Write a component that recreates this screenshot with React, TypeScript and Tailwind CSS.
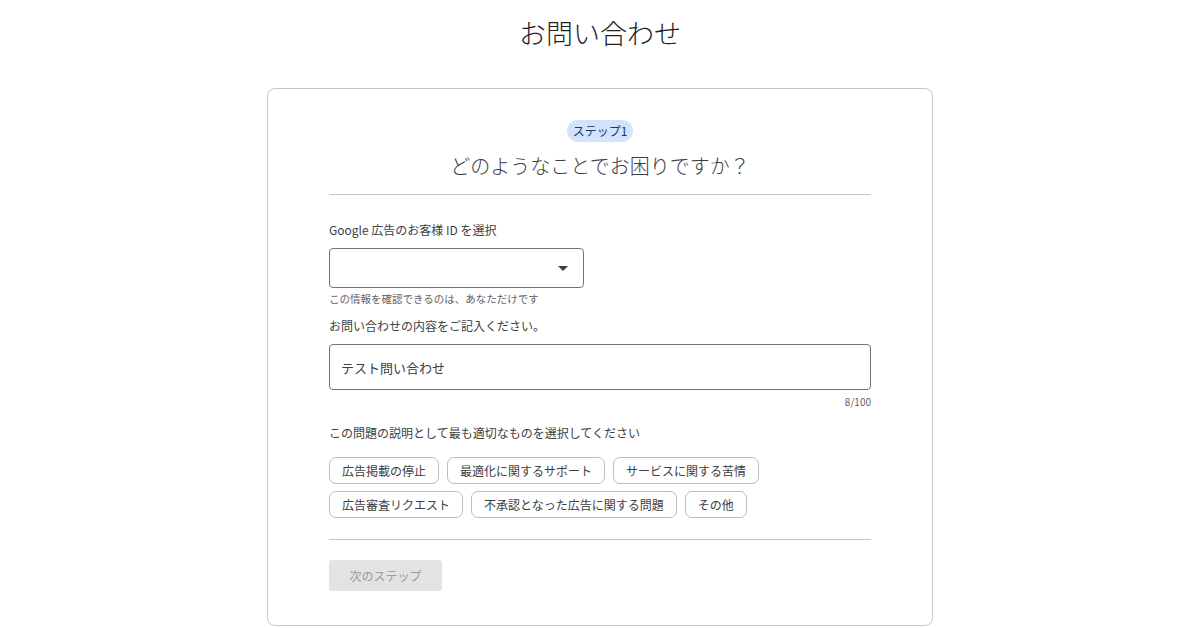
import { useState } from 'react';

const font = { fontFamily: '"Noto Sans CJK JP", "Noto Sans", sans-serif' };

const chipRows = [
  ['広告掲載の停止', '最適化に関するサポート', 'サービスに関する苦情'],
  ['広告審査リクエスト', '不承認となった広告に関する問題', 'その他'],
];

export default function App() {
  const [text, setText] = useState('テスト問い合わせ');

  return (
    <div className="min-h-screen bg-white text-[#3c4043]" style={font}>
      <h1 className="pt-[14px] text-center text-[27px] leading-[38px] font-light text-[#202124]">お問い合わせ</h1>

      <div className="mx-auto mt-[36px] w-[666px] rounded-[8px] border border-[#c6c6c6] px-[61px] pt-[31px] pb-[34px]">
        <div className="flex justify-center">
          <span className="flex h-[22px] items-center rounded-full bg-[#d3e3fd] px-[6px] text-[12px] text-[#1f3760]">
            ステップ1
          </span>
        </div>
        <h2 className="mt-[10px] text-center text-[20px] leading-[28px] font-light text-[#3c4043]">
          どのようなことでお困りですか？
        </h2>
        <div className="mt-[14px] h-px bg-[#c4c4c4]" />

        <label className="mt-[27px] block text-[12px] leading-[16px]">Google 広告のお客様 ID を選択</label>
        <div className="mt-[10px] flex h-[40px] w-[255px] items-center justify-end rounded-[4px] border border-[#70757a] pr-[15px]">
          <svg width="10" height="5" viewBox="0 0 10 5">
            <path d="M0 0 L10 0 L5 5 Z" fill="#3c4043" />
          </svg>
        </div>
        <p className="mt-[4px] text-[10.5px] leading-[14px] text-[#5f6368]">この情報を確認できるのは、あなただけです</p>

        <label className="mt-[12px] block text-[12px] leading-[16px]">お問い合わせの内容をご記入ください。</label>
        <input
          value={text}
          onChange={(e) => setText(e.target.value)}
          className="mt-[10px] block h-[46px] w-full rounded-[4px] border border-[#70757a] px-[11px] text-[13px] text-[#3c4043] outline-none"
        />
        <div className="mt-[6px] text-right text-[10px] leading-[12px] text-[#5f6368]">{text.length}/100</div>

        <p className="mt-[16px] text-[12px] leading-[18px]">この問題の説明として最も適切なものを選択してください</p>
        <div className="mt-[15px] flex flex-col gap-[7px]">
          {chipRows.map((row, i) => (
            <div key={i} className="flex gap-[8px]">
              {row.map((c) => (
                <button
                  key={c}
                  className="h-[27px] rounded-[7px] border border-[#b9bcc0] px-[12px] text-[12px] text-[#3c4043]"
                >
                  {c}
                </button>
              ))}
            </div>
          ))}
        </div>

        <div className="mt-[21px] h-px bg-[#c4c4c4]" />
        <button
          disabled
          className="mt-[20px] h-[31px] w-[113px] rounded-[3px] bg-[#e3e3e3] text-[12px] text-[#9a9a9a]"
        >
          次のステップ
        </button>
      </div>
    </div>
  );
}
